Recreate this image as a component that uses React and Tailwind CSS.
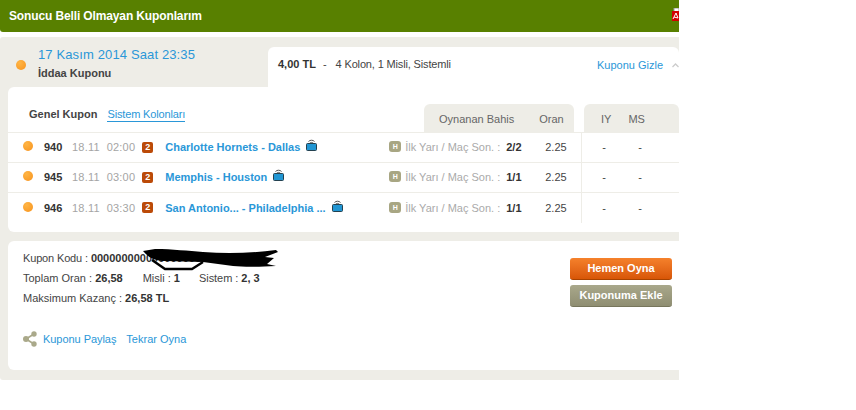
import React from "react";

const rows = [
  { code: "940", time: "02:00", teams: "Charlotte Hornets - Dallas", pick: "2/2" },
  { code: "945", time: "03:00", teams: "Memphis - Houston", pick: "1/1" },
  { code: "946", time: "03:30", teams: "San Antonio... - Philadelphia ...", pick: "1/1" },
];

function Dot() {
  return <span className="block h-[10px] w-[10px] shrink-0 rounded-full bg-[radial-gradient(circle_at_35%_30%,#ffb545,#f7931e)]" />;
}

function TvIcon() {
  return (
    <svg width="11" height="12" viewBox="0 0 11 12" className="shrink-0">
      <path d="M2.5 2.5 C4 0.8 7 0.8 8.5 2.5 M3.8 4 C4.8 3.2 6.2 3.2 7.2 4" fill="none" stroke="#555" strokeWidth="1" />
      <rect x="0.5" y="4.5" width="10" height="7" rx="1" fill="#2196d3" stroke="#24414f" />
    </svg>
  );
}

function Row({ row, last }) {
  return (
    <div className={`flex h-[30px] items-center ${last ? "" : "border-b border-[#eeede7]"}`}>
      <div className="ml-[15px] -mt-[3px] flex w-[15px] shrink-0"><Dot /></div>
      <span className="ml-[6px] w-[18px] text-[11px] font-bold text-[#333]">{row.code}</span>
      <span className="ml-[10px] text-[11px] tracking-[0.2px] text-[#a5a5a5]">18.11</span>
      <span className="ml-[7px] text-[11px] tracking-[0.2px] text-[#a5a5a5]">{row.time}</span>
      <span className="ml-[7px] -mt-[1px] flex h-[11px] w-[11px] items-center justify-center rounded-[2px] bg-[#bb4a08] text-[9px] font-bold leading-none text-white">2</span>
      <div className="ml-[12px] flex w-[224px] shrink-0 items-center">
        <span className="text-[11px] font-bold text-[#2a97d8]">{row.teams}</span>
        <span className="-mt-[5px] ml-[6px]"><TvIcon /></span>
      </div>
      <span className="-mt-[2px] flex h-[11px] w-[12px] shrink-0 items-center justify-center rounded-[3px] bg-[#a8a683] text-[7px] font-bold leading-none text-white">H</span>
      <span className="ml-[4px] w-[101px] shrink-0 whitespace-nowrap text-[11px] text-[#aaa]">İlk Yarı / Maç Son. :</span>
      <span className="w-[39px] shrink-0 text-[11px] font-bold text-[#333]">{row.pick}</span>
      <span className="w-[36px] shrink-0 text-[11px] text-[#444]">2.25</span>
      <div className="flex h-[30px] shrink-0 items-center border-l border-[#eeede7] text-[11px] text-[#444]">
        <span className="ml-[20px] w-[36px]">-</span>
        <span>-</span>
      </div>
    </div>
  );
}

export default function App() {
  return (
    <div className="h-[410px] w-[856px] bg-white font-['Liberation_Sans',Arial,sans-serif]">
      <div className="h-[410px] w-[679px] overflow-hidden">
        <div className="relative flex h-[32px] items-center rounded-bl-[3px] bg-[#588000] pl-[9px]">
          <span className="text-[12px] font-bold tracking-[-0.13px] text-white">Sonucu Belli Olmayan Kuponlarım</span>
          <svg width="7" height="13" viewBox="0 0 7 13" className="absolute right-0 top-[8px]">
            <rect x="2" y="0" width="5" height="4" fill="#fff" stroke="#999" />
            <rect x="0" y="3" width="7" height="10" fill="#d40000" />
            <path d="M1 11 L4 5 L6 10 L2 9" fill="none" stroke="#fff" strokeWidth="1" />
          </svg>
        </div>

        <div className="mt-[5px] h-[343px] rounded-l-[3px] bg-[#eeede7] pt-[10px]">
          <div className="flex h-[40px] items-stretch">
            <div className="flex w-[268px] shrink-0">
              <div className="ml-[16px] mt-[13px]"><Dot /></div>
              <div className="-mt-[1px] ml-[12px]">
                <div className="text-[13px] leading-[18px] tracking-[0.13px] text-[#2a97d8]">17 Kasım 2014 Saat 23:35</div>
                <div className="mt-[1px] text-[11px] font-bold leading-[16px] text-[#444]">İddaa Kuponu</div>
              </div>
            </div>
            <div className="flex flex-1 items-start rounded-t-[6px] bg-white pl-[10px] pt-[10px] text-[11px] leading-[14px]">
              <span className="font-bold text-[#333]">4,00 TL</span>
              <span className="ml-[7px] text-[#444]">-</span>
              <span className="ml-[9px] tracking-[-0.15px] text-[#444]">4 Kolon, 1 Misli, Sistemli</span>
              <span className="ml-auto mt-[1px] text-[#2a97d8]">Kuponu Gizle</span>
              <svg width="7" height="5" viewBox="0 0 7 5" className="ml-[9px] mt-[6px] shrink-0">
                <path d="M0.5 4 L3.5 1 L6.5 4" fill="none" stroke="#ccc" strokeWidth="1.3" />
              </svg>
            </div>
          </div>

          <div className="ml-[8px] h-[145px] rounded-l-[6px] bg-white">
            <div className="flex h-[46px] items-end border-b border-[#eeede7]">
              <div className="mb-[10px] ml-[21px] text-[11px] font-bold text-[#444]">Genel Kupon</div>
              <div className="mb-[10px] ml-[10px] border-b border-[#2a97d8] text-[11px] leading-[13px] tracking-[-0.15px] text-[#2a97d8]">Sistem Kolonları</div>
              <div className="ml-auto flex h-[28px] w-[150px] items-center rounded-t-[6px] bg-[#eeede7] pt-[2px] text-[11px] text-[#666]">
                <span className="ml-[15px]">Oynanan Bahis</span>
                <span className="ml-[25px]">Oran</span>
              </div>
              <div className="ml-[10px] flex h-[28px] w-[95px] items-center rounded-t-[6px] bg-[#eeede7] pt-[2px] text-[11px] text-[#666]">
                <span className="ml-[17px]">IY</span>
                <span className="ml-[17px]">MS</span>
              </div>
            </div>
            {rows.map((row, i) => (
              <Row key={row.code} row={row} last={i === rows.length - 1} />
            ))}
          </div>

          <div className="relative ml-[8px] mt-[9px] flex h-[129px] justify-between overflow-hidden rounded-l-[6px] bg-white pl-[15px]">
            <div className="pt-[7px] text-[11px] leading-[20px] text-[#444]">
              <div className="flex h-[20px] whitespace-nowrap">
                <span className="tracking-[-0.15px]">Kupon Kodu :</span>
                <b className="ml-[3px] text-[#333]">0000000000000000000000000000</b>
              </div>
              <div className="flex h-[20px]">
                <span>Toplam Oran : <b className="text-[#333]">26,58</b></span>
                <span className="ml-[20px]">Misli : <b className="text-[#333]">1</b></span>
                <span className="ml-[19px] tracking-[-0.05px]">Sistem : <b className="text-[#333]">2, 3</b></span>
              </div>
              <div className="h-[20px]">Maksimum Kazanç : <b className="text-[#333]">26,58 TL</b></div>
              <div className="mt-[21px] flex items-center">
                <svg width="14" height="16" viewBox="0 0 14 16" className="shrink-0">
                  <path d="M3 8 L11 3 M3 8 L11 13" stroke="#aaa98a" strokeWidth="1.6" />
                  <circle cx="3" cy="8" r="3" fill="#aaa98a" />
                  <circle cx="11" cy="3" r="2.7" fill="#aaa98a" />
                  <circle cx="11" cy="13" r="2.7" fill="#aaa98a" />
                </svg>
                <span className="ml-[6px] tracking-[-0.05px] text-[#2a97d8]">Kuponu Paylaş</span>
                <span className="ml-[10px] text-[#2a97d8]">Tekrar Oyna</span>
              </div>
            </div>
            <div className="mr-[7px] flex w-[102px] shrink-0 flex-col gap-[5px] pt-[17px]">
              <button type="button" className="h-[22px] rounded-[3px] border-b border-[#a94300] bg-gradient-to-b from-[#f5812b] to-[#d85606] text-[11px] font-bold text-white">Hemen Oyna</button>
              <button type="button" className="h-[22px] rounded-[3px] border-b border-[#77765c] bg-gradient-to-b from-[#a9a88b] to-[#8f8e72] text-[11px] font-bold text-white">Kuponuma Ekle</button>
            </div>
            <svg width="140" height="24" viewBox="0 0 140 24" className="absolute left-[135px] top-[8px]">
              <path d="M0 2 L12 0 C30 0 45 2 60 3 C85 5 110 4 133 1 L135 3 L122 8 L131 9 L124 15 L133 17 C115 18 100 18 90 17 C80 16 70 14 60 13 L22 12 C12 12 6 9 0 2 Z" fill="#000" />
              <path d="M9 11 L22 20 L49 20 L60 13" fill="none" stroke="#000" strokeWidth="2.4" />
            </svg>
          </div>
        </div>
      </div>
    </div>
  );
}
